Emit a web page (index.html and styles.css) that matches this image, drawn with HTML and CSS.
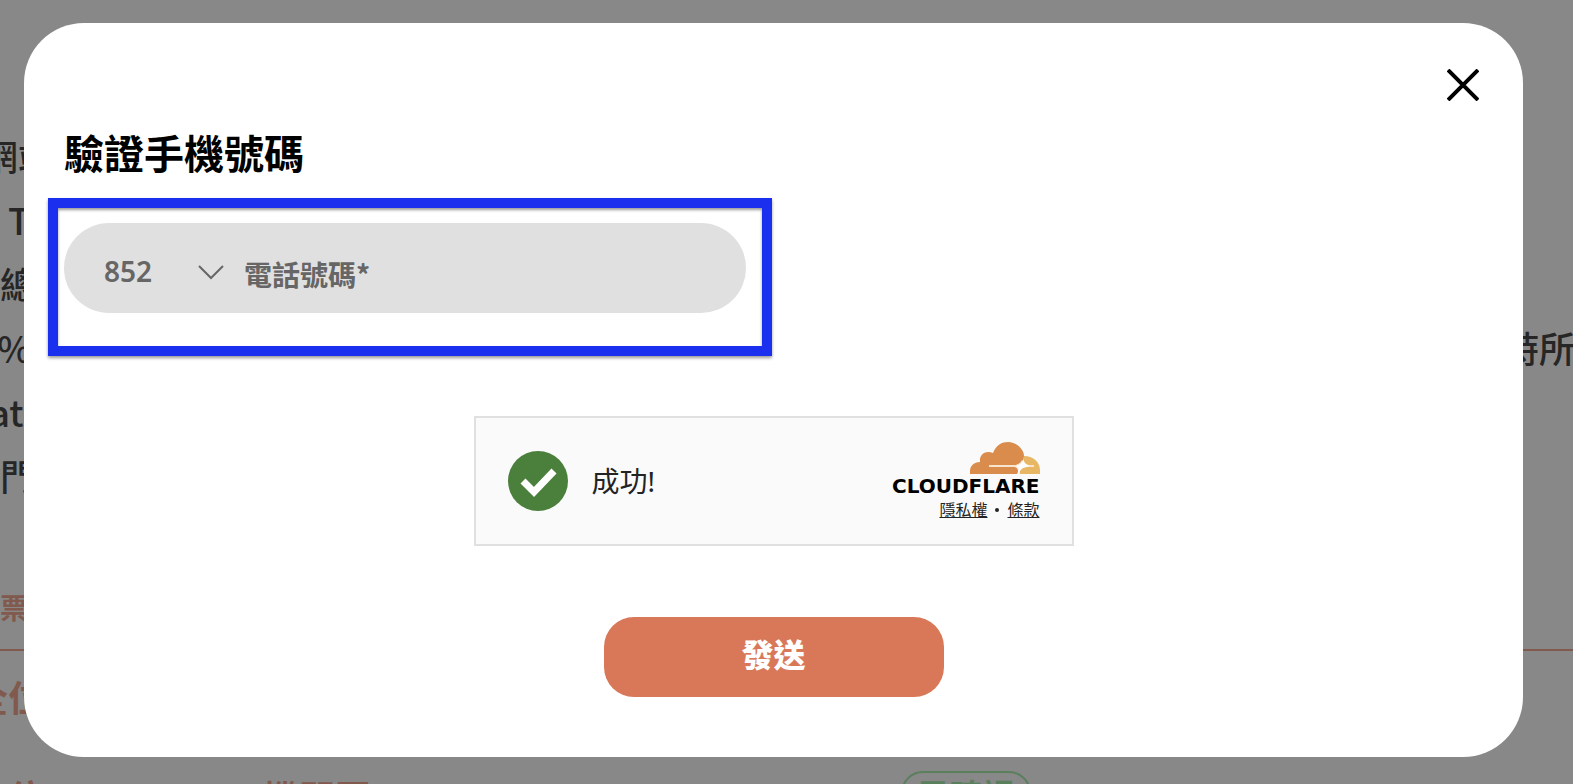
FILE: index.html
```html
<!DOCTYPE html>
<html lang="zh-Hant">
<head>
    <meta charset="UTF-8">
    <title>驗證手機號碼</title>
    <link rel="stylesheet" href="styles.css">
</head>
<body>
    <div class="page">
        <div class="terms">
            <p>z網站</p>
            <p>位 T</p>
            <p>的總</p>
            <p><span>(5%</span><span>時所</span></p>
            <p>Gat</p>
            <p>部門</p>
        </div>
        <div class="tickets">
            <h2>機票</h2>
            <h3>全位</h3>
            <div class="order">
                <span class="order_name">全位</span>
                <span class="order_type">機關頁</span>
                <span class="order_state">已確認</span>
            </div>
        </div>
    </div>

    <div class="mask">
        <form class="modal" role="dialog" aria-labelledby="modal_title">
            <button type="button" class="close" aria-label="關閉">
                <svg width="32" height="32" viewBox="0 0 32 32"><path d="M1 1L31 31M31 1L1 31" stroke="#000" stroke-width="4"/></svg>
            </button>
            <h1 id="modal_title">驗證手機號碼</h1>
            <div class="mark">
                <div class="phone">
                    <select class="code" aria-label="區號">
                        <option>852</option>
                        <option>853</option>
                        <option>86</option>
                    </select>
                    <svg class="arrow" width="28" height="16" viewBox="0 0 28 16"><path d="M2 2L14 14L26 2" fill="none" stroke="#666" stroke-width="2"/></svg>
                    <input type="tel" class="number" placeholder="電話號碼*" aria-label="電話號碼">
                </div>
            </div>
            <div class="captcha">
                <svg class="tick" width="60" height="60" viewBox="0 0 60 60">
                    <circle cx="30" cy="30" r="30" fill="#4b7f3c"/>
                    <path d="M15 30L26 41L46 20" fill="none" stroke="#fff" stroke-width="7"/>
                </svg>
                <span class="result">成功!</span>
                <div class="brand">
                    <svg width="70" height="32" viewBox="0 0 70 32">
                        <path d="M0 32C-1 24 4 20 10 20C9 12 16 8 23 11C26 3 32 0 38 0C46 0 54 7 54 14C54 19 51 22 46 23H19V25H45C48 26 49 29 47 32Z" fill="#da8c4c"/>
                        <path d="M19 23H46C49 22 51 20 52 18L55 22L64 23V25L55 26L51 30L48 27L45 25H19Z" fill="#f8e5cd"/>
                        <path d="M46 24C50 23 52 21 53 18C54 21 56 23 60 24C55 25 52 27 50 31C49 27 48 25 46 24Z" fill="#fff"/>
                        <path d="M54 14C63 14 70 20 70 28V32H50C49 28 52 26 57 25H64V23H59C54 22 53 18 54 14Z" fill="#e8b766"/>
                    </svg>
                    <strong>CLOUDFLARE</strong>
                    <div class="links"><a href="#">隱私權</a><i></i><a href="#">條款</a></div>
                </div>
            </div>
            <button type="submit" class="send">發送</button>
        </form>
    </div>
</body>
</html>
```
FILE: styles.css
```css
*{
    margin:0;
    padding:0;
    box-sizing: border-box;
}
body{
    height:100vh;
    overflow: hidden;
    background:#888;
    font-family:"Noto Sans","Noto Sans CJK TC",sans-serif;
}
button,input,select{
    border:0;
    background:none;
    font-family:inherit;
    outline:none;
}

/* 底層頁面 */
.page{
    height:100vh;
    overflow: hidden;
    padding-top:123px;
}
.terms{
    margin:0 -2px 0 -36px;
    font-size:36px;
    font-weight:500;
    line-height:64px;
    color:#262626;
    font-family:"Noto Sans CJK TC",sans-serif;
}
.terms p{
    display: flex;
    justify-content: space-between;
}
.tickets{
    color:#825a4d;
    font-family:"Noto Sans CJK TC",sans-serif;
}
.tickets h2{
    padding:72px 0 14px;
    border-bottom:2px solid #825a4d;
    font-size:28px;
    line-height:56px;
    text-indent:-28px;
}
.tickets h3{
    font-size:36px;
    line-height:90px;
    text-indent:-28px;
}
.order{
    display: grid;
    grid-template-columns:263px 638px 130px;
    align-items: start;
    font-size:36px;
    font-weight:bold;
    line-height:50px;
    padding-top:30px;
}
.order_name{
    text-indent:-28px;
}
.order_state{
    border:2px solid #5a7f5c;
    border-radius:24px;
    font-size:32px;
    line-height:40px;
    text-align: center;
    color:#5a7f5c;
}

/* 彈窗 */
.mask{
    position: fixed;
    top:0;
    right:0;
    bottom:0;
    left:0;
    padding:23px 50px 27px 24px;
}
.modal{
    display: flex;
    flex-direction: column;
    height:100%;
    padding:46px 40px 60px;
    border-radius:60px;
    background:#fff;
}
.close{
    align-self: flex-end;
    width:40px;
    height:32px;
    cursor: pointer;
}
.close svg{
    display: block;
    margin:0 auto;
}
.modal h1{
    margin-top:23px;
    font-size:40px;
    line-height:60px;
}
.mark{
    width:calc(50% + 14px);
    margin:14px 0 60px -16px;
    padding:15px 16px 33px 6px;
    border:10px solid #1b30ee;
    box-shadow:0 2px 3px rgba(0,0,0,.4),inset 0 2px 3px rgba(0,0,0,.4);
}
.phone{
    display: flex;
    align-items: center;
    height:90px;
    padding:8px 40px 0;
    border-radius:45px;
    background:#e0e0e0;
    color:#666;
}
.code{
    width:120px;
    margin-right:-27px;
    padding-bottom:2px;
    font-family:"Noto Sans",sans-serif;
    font-size:28px;
    font-weight:600;
    color:#666;
    appearance: none;
}
.arrow{
    margin-right:19px;
    pointer-events: none;
}
.number{
    flex:1;
    min-width:0;
    padding-top:4px;
    font-family:"Noto Sans CJK TC",sans-serif;
    font-size:28px;
    font-weight:bold;
    color:#666;
}
.number::placeholder{
    color:#666;
}
.captcha{
    display: flex;
    align-items: center;
    align-self: center;
    width:600px;
    height:130px;
    padding:0 32px;
    border:2px solid #e0e0e0;
    background:#fafafa;
    color:#232323;
}
.result{
    margin-left:24px;
    padding-bottom:2px;
    font-size:28px;
}
.brand{
    display: flex;
    flex-direction: column;
    align-items: flex-end;
    margin-left:auto;
    padding-top:2px;
}
.brand strong{
    font-family:"DejaVu Sans",sans-serif;
    font-size:20px;
    line-height:24px;
    color:#000;
}
.links{
    display: flex;
    align-items: center;
    gap:8px;
    font-size:16px;
    line-height:24px;
}
.links a{
    color:#232323;
}
.links i{
    width:4px;
    height:4px;
    border-radius:2px;
    background:#232323;
}
.send{
    align-self: center;
    width:340px;
    height:80px;
    margin-top:auto;
    padding-bottom:8px;
    border-radius:30px;
    background:#d97859;
    font-size:32px;
    font-weight:900;
    color:#fff;
    cursor: pointer;
}
```
